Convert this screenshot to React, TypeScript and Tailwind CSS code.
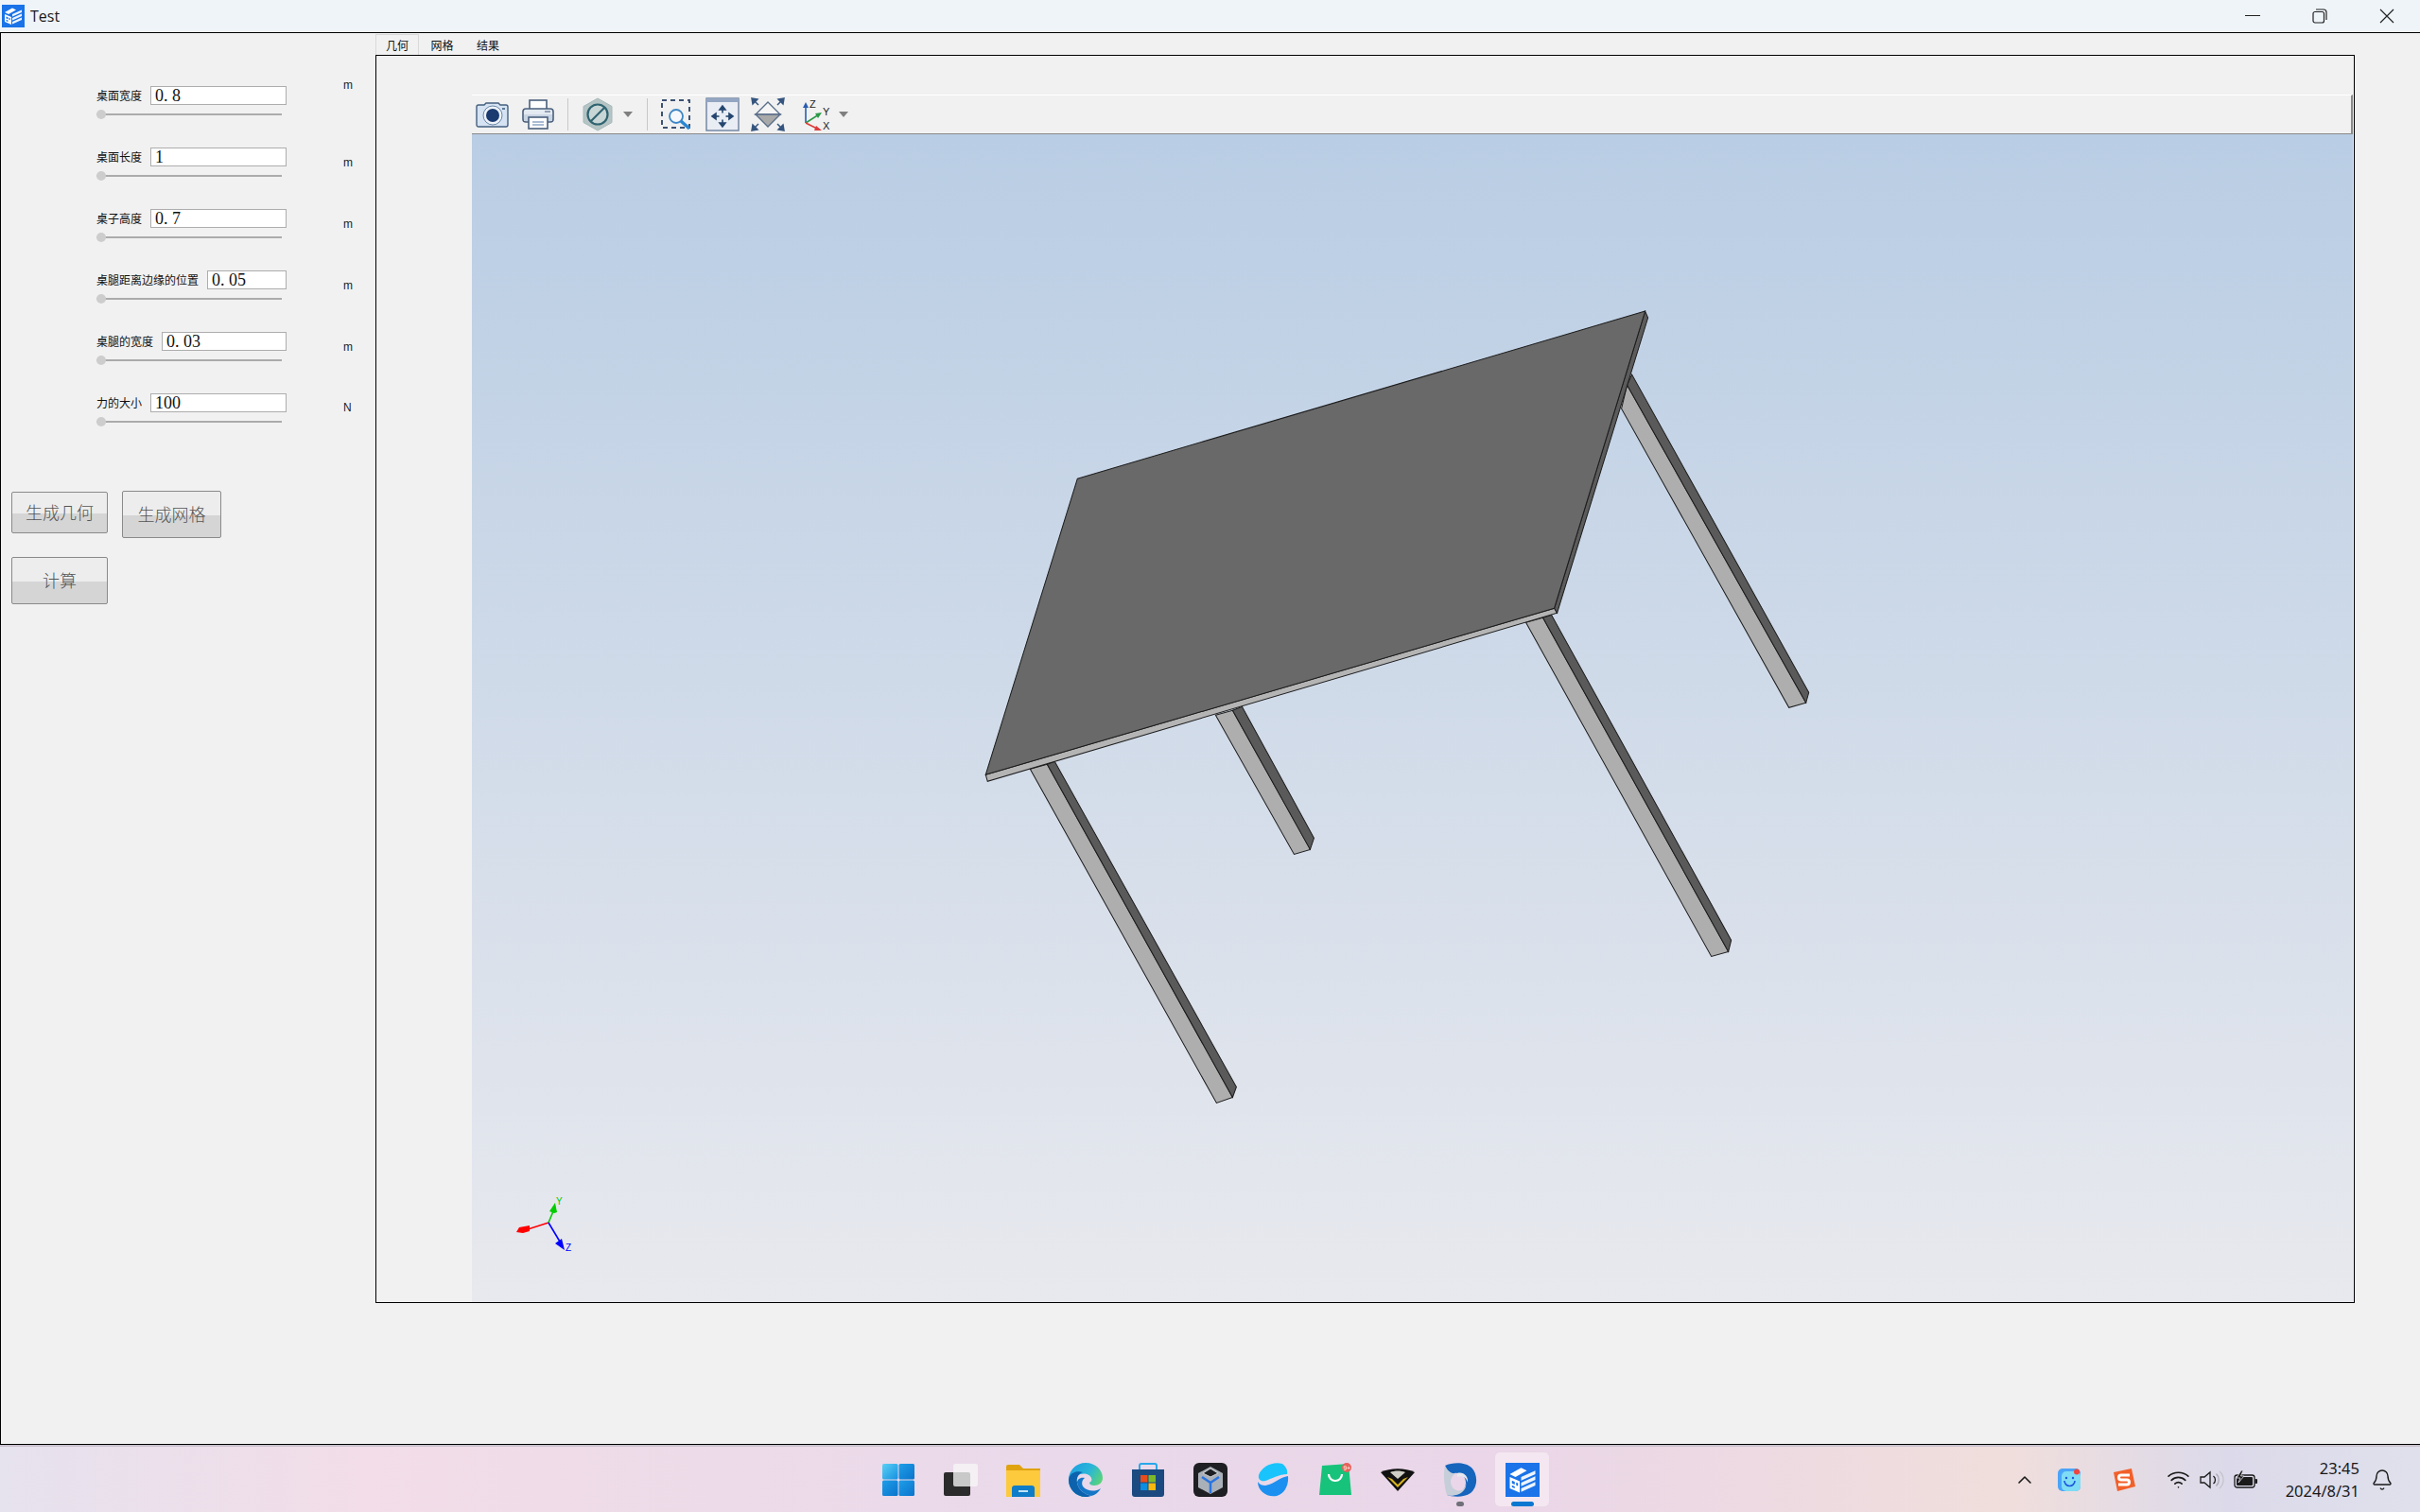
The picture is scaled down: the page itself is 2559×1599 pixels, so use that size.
import { Bell, ChevronUp, Wifi } from "lucide-react";

const params = [
  { label: "桌面宽度", value: "0. 8", unit: "m", unitClass: "-mt-[7px]" },
  { label: "桌面长度", value: "1", unit: "m", unitClass: "mt-[10px]" },
  { label: "桌子高度", value: "0. 7", unit: "m", unitClass: "mt-[10px]" },
  { label: "桌腿距离边缘的位置", value: "0. 05", unit: "m", unitClass: "mt-[10px]" },
  { label: "桌腿的宽度", value: "0. 03", unit: "m", unitClass: "mt-[10px]" },
  { label: "力的大小", value: "100", unit: "N", unitClass: "mt-[9px]" },
];

const cjk = "font-['Noto_Sans_CJK_SC',sans-serif]";

const ParamRow = ({ label, value, unit, unitClass }: { label: string; value: string; unit: string; unitClass: string }) => (
  <div className="flex h-[65px] items-start pl-[101px]">
    <div className="w-[201px]">
      <div className="flex h-[20px] items-center gap-[9px]">
        <span className={`text-[12px] leading-none whitespace-nowrap text-[#111] ${cjk}`}>{label}</span>
        <div className="flex h-[20px] flex-1 items-center border border-[#adadad] bg-white pl-[4px] font-['Liberation_Serif',serif] text-[18px] leading-none text-[#111]">
          {value}
        </div>
      </div>
      <div className="relative mt-[9px] h-[2px] w-[196px] bg-[#ababab]">
        <div className="absolute -top-[4px] left-0 h-[10px] w-[10px] rounded-full bg-[#cdcdcd]" />
      </div>
    </div>
    <span className={`ml-[60px] font-['Liberation_Sans',sans-serif] text-[12px] leading-none text-[#222] ${unitClass}`}>{unit}</span>
  </div>
);

const ActionButton = ({ text, className }: { text: string; className: string }) => (
  <button
    className={`flex items-center justify-center rounded-[2px] border border-[#8a8a8a] bg-[linear-gradient(#ededed_0%,#ededed_52%,#d5d5d5_52%,#d5d5d5_100%)] pb-[2px] text-[18px] leading-none font-light text-[#555] ${cjk} ${className}`}
  >
    {text}
  </button>
);

const AppIcon = ({ size }: { size: number }) => (
  <svg width={size} height={size} viewBox="0 0 24 24">
    <rect width="24" height="24" fill="#1a73e8" />
    <path d="M3 8 L11 3.5 L15 5.5 L7 10 Z" fill="#fff" />
    <path d="M3 10 L10 13 L10 21 L3 18 Z" fill="#fff" />
    <path d="M4.5 12.5 L6.5 13.3 V15.3 L4.5 14.5 Z M4.5 15.8 L6.5 16.6 V18 L4.5 17.2 Z M7.5 13.8 L8.8 14.3 V16.3 L7.5 15.8 Z" fill="#1a73e8" />
    <path d="M11 10 L21 5.5 V8 L11 12.5 Z M11 14 L21 9.5 V12 L11 16.5 Z M11 18 L21 13.5 V16 L11 20.5 Z" fill="#fff" opacity="0.92" />
  </svg>
);

const table = {
  legs: [
    { light: "1714,432 1720,407 1909,743 1891,748", dark: "1720,407 1725,396 1912,732 1909,743" },
    { light: "1613,658 1631,653 1827,1006 1809,1011", dark: "1631,653 1640,650 1830,994 1827,1006" },
    { light: "1285,756 1303,751 1385,898 1368,903", dark: "1303,751 1313,747 1389,886 1385,898" },
    { light: "1089,813 1107,808 1303,1160 1286,1166", dark: "1107,808 1115,805 1307,1149 1303,1160" },
  ],
  top: "1139,506 1739,329 1643,643 1042,819",
  front: "1042,819 1643,643 1646,648 1044,826",
  side: "1739,329 1742,336 1646,648 1643,643",
};

const TableModel = () => (
  <svg className="block h-full w-full" viewBox="499 142 1988 1234" stroke="#1c1c1c" strokeWidth="1">
    {table.legs.map((leg) => (
      <g key={leg.light}>
        <polygon points={leg.light} fill="#aeaeae" />
        <polygon points={leg.dark} fill="#5a5a5a" />
      </g>
    ))}
    <polygon points={table.front} fill="#b4b4b4" />
    <polygon points={table.side} fill="#5c5c5c" />
    <polygon points={table.top} fill="#696969" />
  </svg>
);

const Triad = () => (
  <svg className="absolute top-[1112px] left-[31px]" width="90" height="90" viewBox="530 1255 90 90">
    <line x1="580" y1="1294" x2="555" y2="1302" stroke="#ff0000" strokeWidth="1.6" />
    <polygon points="546,1304 549,1299 560,1297 560,1303 553,1305" fill="#ff0000" />
    <line x1="580" y1="1294" x2="585" y2="1282" stroke="#00cc00" strokeWidth="1.6" />
    <polygon points="587,1273 581,1282 586,1284 589,1283" fill="#00cc00" />
    <line x1="580" y1="1294" x2="592" y2="1314" stroke="#0000ff" strokeWidth="1.6" />
    <polygon points="597,1323 587,1316 594,1311" fill="#0000ff" />
    <text x="588" y="1275" fontSize="10" fill="#00cc00" fontFamily="Liberation Sans">Y</text>
    <text x="598" y="1324" fontSize="10" fill="#0000ff" fontFamily="Liberation Sans">Z</text>
  </svg>
);

const Caret = ({ className }: { className: string }) => (
  <svg className={className} width="12" height="6" viewBox="0 0 12 6">
    <polygon points="1,0 11,0 6,6" fill="#7f7f7f" />
  </svg>
);

const ToolSep = ({ className }: { className: string }) => <div className={`h-[34px] w-px bg-[#c8c8c8] ${className}`} />;

const CameraIcon = ({ className }: { className: string }) => (
  <svg className={className} width="36" height="36" viewBox="0 0 36 36">
    <path d="M3 8 h6 l2 -2 h13 l2 2 h6 a2 2 0 0 1 2 2 v19 a2 2 0 0 1 -2 2 h-29 a2 2 0 0 1 -2 -2 v-19 a2 2 0 0 1 2 -2 z" fill="#d5e3f3" stroke="#44607f" strokeWidth="1.4" />
    <circle cx="18" cy="19" r="10" fill="#eef3f9" stroke="#6d88a8" />
    <circle cx="18" cy="19" r="7" fill="#1a3a70" />
    <rect x="28" y="11" width="3" height="2" fill="#5d7896" />
  </svg>
);

const PrinterIcon = ({ className }: { className: string }) => (
  <svg className={className} width="36" height="36" viewBox="0 0 36 36" fill="none" stroke="#4a607c" strokeWidth="1.6">
    <rect x="9" y="3" width="18" height="10" fill="#fff" />
    <rect x="2" y="12" width="32" height="14" rx="3" fill="#e4eaf2" />
    <rect x="3" y="18" width="30" height="7" fill="#c9d5e3" stroke="none" />
    <rect x="8" y="21" width="20" height="12" fill="#fff" />
    <path d="M12 26 h12 M12 29 h12" stroke="#8fa8c6" />
    <path d="M25 15 h6" stroke="#7d8fa5" />
  </svg>
);

const HexIcon = ({ className }: { className: string }) => (
  <svg className={className} width="36" height="36" viewBox="0 0 36 36">
    <polygon points="18,1 33,9.5 33,26.5 18,35 3,26.5 3,9.5" fill="#b5c4c4" stroke="#a7b8b8" />
    <circle cx="18" cy="18" r="10.5" fill="#c9d6d6" stroke="#2f6470" strokeWidth="2.2" />
    <line x1="11" y1="25" x2="25" y2="11" stroke="#2f6470" strokeWidth="2.2" />
  </svg>
);

const ZoomBoxIcon = ({ className }: { className: string }) => (
  <svg className={className} width="36" height="36" viewBox="0 0 36 36" fill="none">
    <rect x="3" y="3" width="29" height="29" stroke="#3c5273" strokeWidth="2" strokeDasharray="5 4" />
    <circle cx="18" cy="20" r="7" fill="#f4f8fc" stroke="#3d87c5" strokeWidth="1.8" />
    <line x1="23" y1="25" x2="32" y2="33" stroke="#2a86d1" strokeWidth="3.4" />
  </svg>
);

const PanIcon = ({ className }: { className: string }) => (
  <svg className={className} width="36" height="36" viewBox="0 0 36 36">
    <rect x="1" y="1" width="34" height="34" fill="#e9edf4" stroke="#6c809f" strokeWidth="1.4" />
    <rect x="1" y="1" width="34" height="4" fill="#93a6c2" />
    <g stroke="#24466f" strokeWidth="1.6" fill="#24466f">
      <line x1="18" y1="11" x2="18" y2="29" />
      <line x1="9" y1="20" x2="27" y2="20" />
      <polygon points="18,9 15,13 21,13" />
      <polygon points="18,31 15,27 21,27" />
      <polygon points="7,20 11,17 11,23" />
      <polygon points="29,20 25,17 25,23" />
    </g>
    <rect x="14.5" y="16.5" width="7" height="7" fill="#e9edf4" />
  </svg>
);

const FitIcon = ({ className }: { className: string }) => (
  <svg className={className} width="36" height="36" viewBox="0 0 36 36">
    <polygon points="18,5 31,18 5,18" fill="#f5f5f5" stroke="#5a6e8a" strokeWidth="1.4" />
    <polygon points="5,18 31,18 18,31" fill="#a9a9a9" stroke="#5a6e8a" strokeWidth="1.4" />
    <g stroke="#35557f" strokeWidth="1.5" fill="#35557f">
      <line x1="3" y1="3" x2="8" y2="8" />
      <polygon points="1,1 7,2 2,7" />
      <line x1="33" y1="3" x2="28" y2="8" />
      <polygon points="35,1 29,2 34,7" />
      <line x1="3" y1="33" x2="8" y2="28" />
      <polygon points="1,35 7,34 2,29" />
      <line x1="33" y1="33" x2="28" y2="28" />
      <polygon points="35,35 29,34 34,29" />
    </g>
  </svg>
);

const AxesIcon = ({ className }: { className: string }) => (
  <svg className={className} width="36" height="36" viewBox="0 0 36 36" fontFamily="Liberation Sans" fontSize="11" fill="#222">
    <line x1="8" y1="27" x2="8" y2="8" stroke="#2a5db0" strokeWidth="1.6" />
    <polygon points="8,5 5,11 11,11" fill="#2a5db0" />
    <line x1="8" y1="27" x2="22" y2="18" stroke="#2b9a48" strokeWidth="1.6" />
    <polygon points="25,16 18,17 21,22" fill="#2b9a48" />
    <line x1="8" y1="27" x2="22" y2="34" stroke="#dd3b3b" strokeWidth="1.6" />
    <polygon points="25,35 19,30 17,35" fill="#dd3b3b" />
    <text x="12" y="11">Z</text>
    <text x="26" y="19">Y</text>
    <text x="26" y="34">X</text>
  </svg>
);

const StartIcon = () => (
  <svg width="36" height="36" viewBox="0 0 36 36">
    <defs>
      <linearGradient id="startA" x1="0" y1="0" x2="1" y2="1">
        <stop offset="0" stopColor="#5cd0f5" />
        <stop offset="1" stopColor="#1590e0" />
      </linearGradient>
      <linearGradient id="startB" x1="0" y1="0" x2="1" y2="1">
        <stop offset="0" stopColor="#1f9ee8" />
        <stop offset="1" stopColor="#0a74cc" />
      </linearGradient>
    </defs>
    <rect x="1" y="1" width="16.5" height="16.5" rx="1.5" fill="url(#startA)" />
    <rect x="18.5" y="1" width="16.5" height="16.5" rx="1.5" fill="url(#startB)" />
    <rect x="1" y="18.5" width="16.5" height="16.5" rx="1.5" fill="url(#startB)" />
    <rect x="18.5" y="18.5" width="16.5" height="16.5" rx="1.5" fill="url(#startB)" />
  </svg>
);

const TaskViewIcon = () => (
  <svg width="36" height="36" viewBox="0 0 36 36">
    <rect x="0" y="10" width="28" height="25" rx="2" fill="#2b2b2b" />
    <rect x="10" y="1" width="26" height="24" rx="2" fill="#f6f6f6" opacity="0.78" />
  </svg>
);

const FolderIcon = () => (
  <svg width="36" height="36" viewBox="0 0 36 36">
    <path d="M0 4 a2 2 0 0 1 2 -2 h12 l4 4 h18 v6 h-36 z" fill="#e0a30f" />
    <rect y="8" width="36" height="28" fill="#fdca3e" />
    <path d="M6 36 v-9 a3 3 0 0 1 3 -3 h18 a3 3 0 0 1 3 3 v9 z" fill="#0f7cc8" />
    <rect x="13" y="29" width="10" height="2" fill="#bfe3f7" />
  </svg>
);

const EdgeIcon = () => (
  <svg width="36" height="36" viewBox="0 0 36 36">
    <defs>
      <linearGradient id="edgeA" x1="0" y1="0" x2="1" y2="0.6">
        <stop offset="0" stopColor="#1b9de2" />
        <stop offset="0.55" stopColor="#2ab5d8" />
        <stop offset="1" stopColor="#62d86a" />
      </linearGradient>
    </defs>
    <path d="M18 0 C29 0 36 8 36 16 C36 21 32 24 27 24 C24 24 22 23 22 21 C24 20 25 18 24 16 C22 11 14 10 9 14 C5 17 5 25 10 30 C13 33 17 35 20 36 H18 C8 36 0 28 0 18 C0 8 8 0 18 0 Z" fill="url(#edgeA)" />
    <path d="M0 18 C1 10 9 8 15 10 C11 11 8 15 9 21 C10 28 16 33 24 35 C21 36 19 36 18 36 C8 36 0 28 0 18 Z" fill="#0c62ad" />
    <path d="M9 21 C10 28 16 33 24 35 C28 34 32 31 34 27 C28 31 20 30 16 26 C13 23 14 18 17 16 C12 15 9 18 9 21 Z" fill="#1476c6" />
  </svg>
);

const StoreIcon = () => (
  <svg width="36" height="36" viewBox="0 0 36 36">
    <path d="M9 8 V3 a2 2 0 0 1 2 -2 h14 a2 2 0 0 1 2 2 V8" fill="none" stroke="#28a8ea" strokeWidth="2" />
    <path d="M1 7 h34 v26 a3 3 0 0 1 -3 3 h-28 a3 3 0 0 1 -3 -3 z" fill="#1a4a80" />
    <rect x="10" y="13" width="7.5" height="7.5" fill="#e94c1d" />
    <rect x="18.5" y="13" width="7.5" height="7.5" fill="#7cb82a" />
    <rect x="10" y="21.5" width="7.5" height="7.5" fill="#0b8de0" />
    <rect x="18.5" y="21.5" width="7.5" height="7.5" fill="#f8b80e" />
  </svg>
);

const CubeAppIcon = () => (
  <svg width="36" height="36" viewBox="0 0 36 36">
    <rect width="36" height="36" rx="6" fill="#1e1f22" />
    <polygon points="18,4 31,11 31,26 18,33 5,26 5,11" fill="#aab0b8" />
    <polygon points="18,6 26,11 18,15 10,11" fill="#1e1f22" stroke="#cfd3d8" strokeWidth="1" />
    <path d="M9 15 L18 21 L27 15 M18 21 V32" stroke="#2a74e0" strokeWidth="2.5" fill="none" />
  </svg>
);

const SwirlBlueIcon = () => (
  <svg width="36" height="36" viewBox="0 0 36 36">
    <path d="M28 1 C18 -2 6 4 3 13 C2 18 6 20 10 19 C16 17 25 12 33 12 C34 8 32 4 28 1 Z" fill="#18c4fb" />
    <path d="M2 20 C2 30 12 37 22 35 C30 33 35 24 34 14 C26 15 18 23 10 24 C7 24 4 23 2 20 Z" fill="#1c90f0" />
  </svg>
);

const BagIcon = () => (
  <svg width="36" height="36" viewBox="0 0 36 36">
    <path d="M4 3 L32 1 L35 34 H1 Z" fill="#17c37b" />
    <path d="M11 12 a7 7 0 0 0 14 0" fill="none" stroke="#fff" strokeWidth="2.2" />
    <circle cx="30" cy="5" r="5" fill="#e8605a" />
    <text x="26.6" y="7.6" fontSize="6.5" fill="#fff" fontFamily="Liberation Sans">9+</text>
  </svg>
);

const ShieldIcon = () => (
  <svg width="36" height="36" viewBox="0 0 36 36">
    <path d="M0 10 C10 5 26 5 36 10 L18 30 Z" fill="#111" />
    <path d="M7 15 L18 26 L29 15 L24 17 L18 23 L12 17 Z" fill="#d6b21e" />
    <path d="M10 10 C15 8 21 8 26 10 L18 17 Z" fill="#cfcfc6" />
  </svg>
);

const SwirlSilverIcon = () => (
  <svg width="36" height="36" viewBox="0 0 36 36">
    <path d="M2 3 C10 -1 24 -1 30 5 C37 12 37 26 29 32 C22 37 10 36 4 34 C14 36 24 30 24 21 C24 14 18 10 12 11 C8 12 4 9 2 3 Z" fill="#1665bd" />
    <path d="M2 3 C5 9 9 12 14 11 C6 14 6 26 14 29 C20 31 24 27 24 21 C26 30 15 37 4 34 C1 24 0 12 2 3 Z" fill="#c5ced9" />
    <path d="M15 11 C21 9 27 14 26 21 C25 16 20 13 15 15 Z" fill="#e6e8ee" />
  </svg>
);

const SmileIcon = () => (
  <svg width="24" height="24" viewBox="0 0 24 24">
    <rect width="24" height="24" rx="5" fill="#4aa4f8" />
    <rect x="4" y="3" width="20" height="21" rx="5" fill="#7fdcf5" />
    <circle cx="9" cy="10" r="1.2" fill="#1a55e0" />
    <circle cx="16" cy="10" r="1.2" fill="#1a55e0" />
    <path d="M7 13 a5.5 5.5 0 0 0 11 0" fill="none" stroke="#1a55e0" strokeWidth="1.6" />
    <circle cx="20" cy="3.5" r="3" fill="#f0453f" />
  </svg>
);

const SogouIcon = () => (
  <svg width="24" height="24" viewBox="0 0 24 24">
    <polygon points="1,4 20,0 24,19 5,24" fill="#f2602a" />
    <path d="M18 7 H9 a2 2 0 0 0 0 5 h6 a2 2 0 0 1 0 5 H6" fill="none" stroke="#fff" strokeWidth="3" />
  </svg>
);

const VolumeIcon = () => (
  <svg width="26" height="22" viewBox="0 0 26 22" fill="none" stroke="#1a1a1a" strokeWidth="1.3">
    <path d="M1 8 H5 L11 3 V19 L5 14 H1 Z" />
    <path d="M14.5 7 a5 5 0 0 1 0 8" />
    <path d="M17.5 4.5 a9 9 0 0 1 0 13" stroke="#a8a8b0" />
    <path d="M21 2 a12 12 0 0 1 0 18" stroke="#c4c4cc" />
  </svg>
);

const BatteryIcon = () => (
  <svg width="26" height="20" viewBox="0 0 26 20">
    <rect x="1" y="5" width="21" height="13" rx="2.5" fill="none" stroke="#1a1a1a" strokeWidth="1.3" />
    <rect x="3" y="7" width="17" height="9" rx="1" fill="#1a1a1a" />
    <rect x="22.5" y="9" width="2.5" height="5" rx="1" fill="#1a1a1a" />
    <path d="M8 0 L3 8 H7 L5 13 L11 6 H7.5 L10 0 Z" fill="#1a1a1a" stroke="#e4deea" strokeWidth="0.8" />
  </svg>
);

const taskbarIcons = [
  { key: "start", icon: <StartIcon /> },
  { key: "task", icon: <TaskViewIcon /> },
  { key: "folder", icon: <FolderIcon /> },
  { key: "edge", icon: <EdgeIcon /> },
  { key: "store", icon: <StoreIcon /> },
  { key: "cube", icon: <CubeAppIcon /> },
  { key: "swirl", icon: <SwirlBlueIcon /> },
  { key: "bag", icon: <BagIcon /> },
  { key: "shield", icon: <ShieldIcon /> },
];

export default function App() {
  return (
    <div className="flex h-[1599px] w-[2559px] flex-col overflow-hidden bg-[#f1f1f1] font-['Noto_Sans',sans-serif]">
      {/* title bar */}
      <div className="flex h-[34px] items-center justify-between bg-[#eff4f9]">
        <div className="flex items-center gap-[6px] pl-[2px]">
          <AppIcon size={24} />
          <span className="font-['Open_Sans',sans-serif] text-[16px] leading-none text-[#1a1a1a]">Test</span>
        </div>
        <div className="flex text-[#1a1a1a]">
          <div className="flex h-[34px] w-[71px] items-center justify-center">
            <svg width="16" height="2" viewBox="0 0 16 2"><rect width="16" height="1" fill="#222" /></svg>
          </div>
          <div className="flex h-[34px] w-[71px] items-center justify-center">
            <svg width="16" height="16" viewBox="0 0 16 16" fill="none" stroke="#222" strokeWidth="1.2">
              <rect x="1" y="3.5" width="11.5" height="11.5" rx="2" />
              <path d="M4 1 h8 a3 3 0 0 1 3 3 v8" />
            </svg>
          </div>
          <div className="flex h-[34px] w-[71px] items-center justify-center">
            <svg width="16" height="16" viewBox="0 0 16 16" stroke="#222" strokeWidth="1.2">
              <path d="M1 1 L15 15 M15 1 L1 15" />
            </svg>
          </div>
        </div>
      </div>

      {/* window body */}
      <div className="flex flex-1 border-t border-b border-l border-black">
        <aside className="w-[396px] pt-[56px] pl-[11px]">
          <div className="-ml-[11px]">
            {params.map((p) => (
              <ParamRow key={p.label} {...p} />
            ))}
          </div>
          <div className="mt-[38px] flex items-start gap-[15px]">
            <ActionButton text="生成几何" className="mt-px h-[44px] w-[102px]" />
            <ActionButton text="生成网格" className="h-[50px] w-[105px]" />
          </div>
          <ActionButton text="计算" className="mt-[20px] h-[50px] w-[102px]" />
        </aside>

        <section className="flex w-[2093px] flex-col pt-px">
          <div className="flex h-[22px] items-stretch">
            <div className={`flex w-[46px] items-center justify-center border border-b-0 border-[#d9d9d9] bg-[#f1f1f1] text-[12px] leading-none text-[#111] ${cjk}`}>几何</div>
            <div className={`flex w-[49px] items-center justify-center pt-px text-[12px] leading-none text-[#111] ${cjk}`}>网格</div>
            <div className={`flex w-[48px] items-center justify-center pt-px text-[12px] leading-none text-[#111] ${cjk}`}>结果</div>
          </div>
          <div className="flex h-[1320px] flex-col border border-black pt-[41px] pl-[101px] pr-px">
            <div className="flex h-[43px] items-center border-t border-r-2 border-b border-t-white border-r-[#8a8a8a] border-b-[#8a8a8a] bg-[#f1f1f1] pl-[4px]">
              <CameraIcon className="" />
              <PrinterIcon className="ml-[12px]" />
              <ToolSep className="ml-[13px]" />
              <HexIcon className="ml-[13px]" />
              <Caret className="ml-[8px]" />
              <ToolSep className="ml-[14px]" />
              <ZoomBoxIcon className="ml-[12px]" />
              <PanIcon className="ml-[13px]" />
              <FitIcon className="ml-[12px]" />
              <AxesIcon className="ml-[14px]" />
              <Caret className="ml-[6px]" />
            </div>
            <div className="relative flex-1 bg-[linear-gradient(#b9cde4,#e8e9ee)]">
              <TableModel />
              <Triad />
            </div>
          </div>
        </section>
      </div>

      {/* taskbar */}
      <div className="grid h-[71px] grid-cols-[1fr_auto_1fr] border-t-2 border-[#c9c2cd] bg-[linear-gradient(90deg,#e6e2ee_0%,#f2dde8_15%,#e9d9ea_45%,#ead6e8_62%,#f0dedc_83%,#dcdaea_92%,#e0e0ec_100%)]">
        <div />
        <div className="flex items-center">
          {taskbarIcons.map((t) => (
            <div key={t.key} className="flex h-[69px] w-[66px] items-center justify-center">
              {t.icon}
            </div>
          ))}
          <div className="relative flex h-[69px] w-[66px] items-center justify-center">
            <SwirlSilverIcon />
            <div className="absolute bottom-[6px] h-[5px] w-[8px] rounded-full bg-[#707078]" />
          </div>
          <div className="relative flex h-[69px] w-[66px] items-center justify-center">
            <div className="absolute top-[6px] left-[4px] h-[57px] w-[57px] rounded-[5px] bg-[#f4e7f1]" />
            <div className="relative">
              <AppIcon size={36} />
            </div>
            <div className="absolute bottom-[6px] h-[5px] w-[24px] rounded-full bg-[#0a78d0]" />
          </div>
        </div>
        <div className="flex items-center justify-end text-[#1a1a1a]">
          <div className="flex w-[44px] justify-center">
            <ChevronUp size={24} strokeWidth={1.6} />
          </div>
          <div className="ml-[8px] flex w-[34px] justify-center">
            <SmileIcon />
          </div>
          <div className="ml-[24px] flex w-[34px] justify-center">
            <SogouIcon />
          </div>
          <div className="ml-[22px] flex w-[36px] justify-center">
            <Wifi size={25} strokeWidth={1.6} />
          </div>
          <div className="flex w-[36px] justify-center">
            <VolumeIcon />
          </div>
          <div className="flex w-[36px] justify-center">
            <BatteryIcon />
          </div>
          <div className="ml-[16px] flex w-[86px] flex-col items-end gap-[3px] text-[16.5px] leading-[21px] text-[#1a1a1a]">
            <span>23:45</span>
            <span>2024/8/31</span>
          </div>
          <div className="mr-[26px] ml-[10px] flex w-[28px] justify-center">
            <Bell size={24} strokeWidth={1.4} />
          </div>
        </div>
      </div>
    </div>
  );
}
